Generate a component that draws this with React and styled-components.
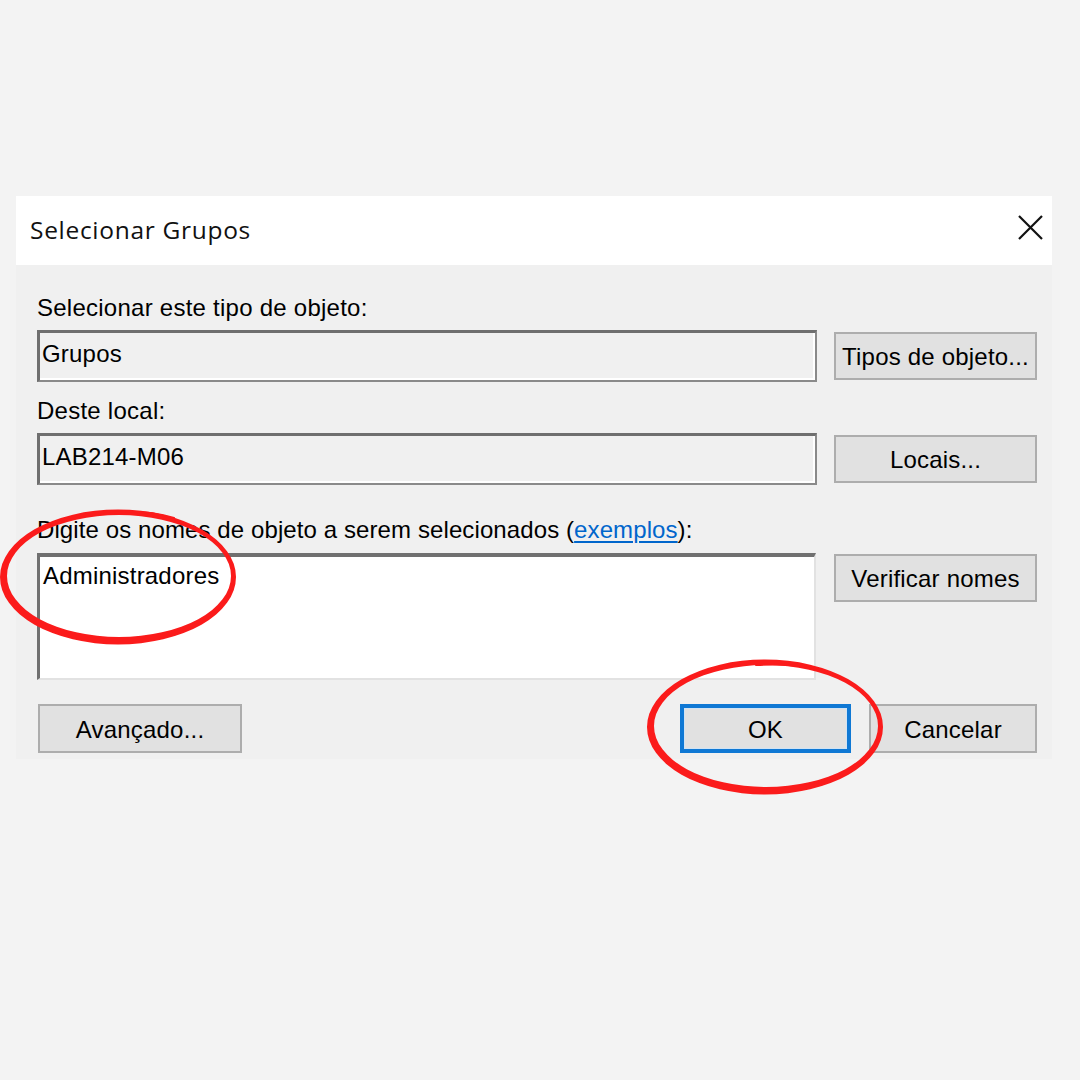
import React from "react";
import styled, { createGlobalStyle } from "styled-components";

const Global = createGlobalStyle`
  html, body { margin: 0; padding: 0; background: #f3f3f3; }
  #root { min-height: 1080px; }
`;

const Page = styled.div`
  position: relative;
  width: 1080px;
  height: 1080px;
  box-sizing: border-box;
  padding: 196px 0 0 16px;
  background: #f3f3f3;
  font-family: "Liberation Sans", Arial, sans-serif;
  color: #000;
`;

const Dialog = styled.div`
  width: 1036px;
  display: flex;
  flex-direction: column;
`;

const TitleBar = styled.div`
  height: 69px;
  background: #ffffff;
  display: flex;
  align-items: center;
  justify-content: space-between;
  padding: 0 9px 0 14px;
  box-sizing: border-box;
`;

const Title = styled.div`
  font-family: "Open Sans", "Noto Sans", sans-serif;
  font-size: 24.5px;
  letter-spacing: 0.7px;
  color: #111;
  margin-top: -2px;
`;

const CloseBtn = styled.div`
  width: 25px;
  height: 25px;
  display: flex;
  margin-top: -6px;
`;

const Body = styled.div`
  background: #f0f0f0;
  padding: 29px 15px 6px 21px;
  display: flex;
  flex-direction: column;
`;

const Label = styled.div`
  font-size: 24px;
  letter-spacing: ${(p) => (p.$ls != null ? p.$ls : 0.25)}px;
  line-height: 28px;
  height: 28px;
  margin-top: ${(p) => p.$mt || 0}px;
  margin-bottom: 8px;
  white-space: nowrap;
`;

const Link = styled.span`
  color: #0066cc;
  text-decoration: underline;
  text-decoration-thickness: 2px;
  text-underline-offset: 3px;
`;

const Row = styled.div`
  display: grid;
  grid-template-columns: 780px 203px;
  column-gap: 17px;
  align-items: ${(p) => p.$align || "center"};
`;

const TextBox = styled.div`
  height: 52px;
  box-sizing: border-box;
  border-top: 3px solid #6f6f6f;
  border-left: 3px solid #6f6f6f;
  border-right: 2px solid #8a8a8a;
  border-bottom: 2px solid #8a8a8a;
  box-shadow: inset -2px -2px 0 #ffffff;
  background: #f0f0f0;
  padding: 7px 4px 0 2px;
  font-size: 24px;
  letter-spacing: 0.2px;
  line-height: 28px;
`;

const TextArea = styled.div`
  width: 779px;
  height: 127px;
  margin-top: 1px;
  box-sizing: border-box;
  border-top: 4px solid #707070;
  border-left: 3px solid #707070;
  border-right: 2px solid #e2e2e2;
  border-bottom: 2px solid #e2e2e2;
  background: #ffffff;
  padding: 5px 4px 0 3px;
  font-size: 24px;
  letter-spacing: 0.2px;
  line-height: 28px;
`;

const Button = styled.div`
  box-sizing: border-box;
  width: ${(p) => p.$w || 203}px;
  height: ${(p) => p.$h || 48}px;
  margin-top: ${(p) => p.$mt || 0}px;
  background: #e1e1e1;
  border: ${(p) => (p.$default ? "4px solid #0f78d4" : "2px solid #adadad")};
  box-shadow: ${(p) => (p.$default ? "inset 0 0 0 1px #cfe3f5" : "none")};
  display: flex;
  align-items: center;
  justify-content: center;
  font-size: 24px;
  letter-spacing: 0.2px;
  line-height: 28px;
  white-space: nowrap;
  padding-top: 2px;
`;

const Footer = styled.div`
  margin-top: 24px;
  display: flex;
  align-items: center;
  padding-left: 1px;
  gap: 18px;
`;

const Spacer = styled.div`
  flex: 1;
`;

const Overlay = styled.svg`
  position: absolute;
  left: 0;
  top: 0;
  width: 1080px;
  height: 1080px;
  pointer-events: none;
`;

const ellipse = (cx, cy, rx, ry) =>
  `M${cx - rx} ${cy} a${rx} ${ry} 0 1 0 ${2 * rx} 0 a${rx} ${ry} 0 1 0 ${-2 * rx} 0 Z`;

function Ring({ cx, cy, tail }) {
  return (
    <g>
      <path
        d={`${ellipse(cx, cy, 118, 67.5)} ${ellipse(cx + 1, cy - 1, 112, 61)}`}
        fill="#fb1b1b"
        fillRule="evenodd"
      />
      <path d={tail} fill="none" stroke="#fb1b1b" strokeWidth="2" strokeLinecap="round" />
    </g>
  );
}

export default function App() {
  return (
    <Page>
      <Global />
      <Dialog>
        <TitleBar>
          <Title>Selecionar Grupos</Title>
          <CloseBtn>
            <svg width="25" height="25" viewBox="0 0 25 25">
              <path d="M1 1 L24 24 M24 1 L1 24" stroke="#111" strokeWidth="2.2" />
            </svg>
          </CloseBtn>
        </TitleBar>
        <Body>
          <Label>Selecionar este tipo de objeto:</Label>
          <Row>
            <TextBox>Grupos</TextBox>
            <Button>Tipos de objeto...</Button>
          </Row>
          <Label $mt={15}>Deste local:</Label>
          <Row>
            <TextBox>LAB214-M06</TextBox>
            <Button>Locais...</Button>
          </Row>
          <Label $mt={31} $ls={0.1}>
            Digite os nomes de objeto a serem selecionados (<Link>exemplos</Link>):
          </Label>
          <Row $align="start">
            <TextArea>Administradores</TextArea>
            <Button $mt={2}>Verificar nomes</Button>
          </Row>
          <Footer>
            <Button $w={204} $h={49}>Avançado...</Button>
            <Spacer />
            <Button $w={171} $h={49} $default>OK</Button>
            <Button $w={168} $h={49}>Cancelar</Button>
          </Footer>
        </Body>
      </Dialog>
      <Overlay viewBox="0 0 1080 1080">
        <Ring cx={118} cy={577} tail="M104 514 Q140 508 174 518" />
        <Ring cx={765} cy={727} tail="M756 665 Q790 663 818 669" />
      </Overlay>
    </Page>
  );
}
